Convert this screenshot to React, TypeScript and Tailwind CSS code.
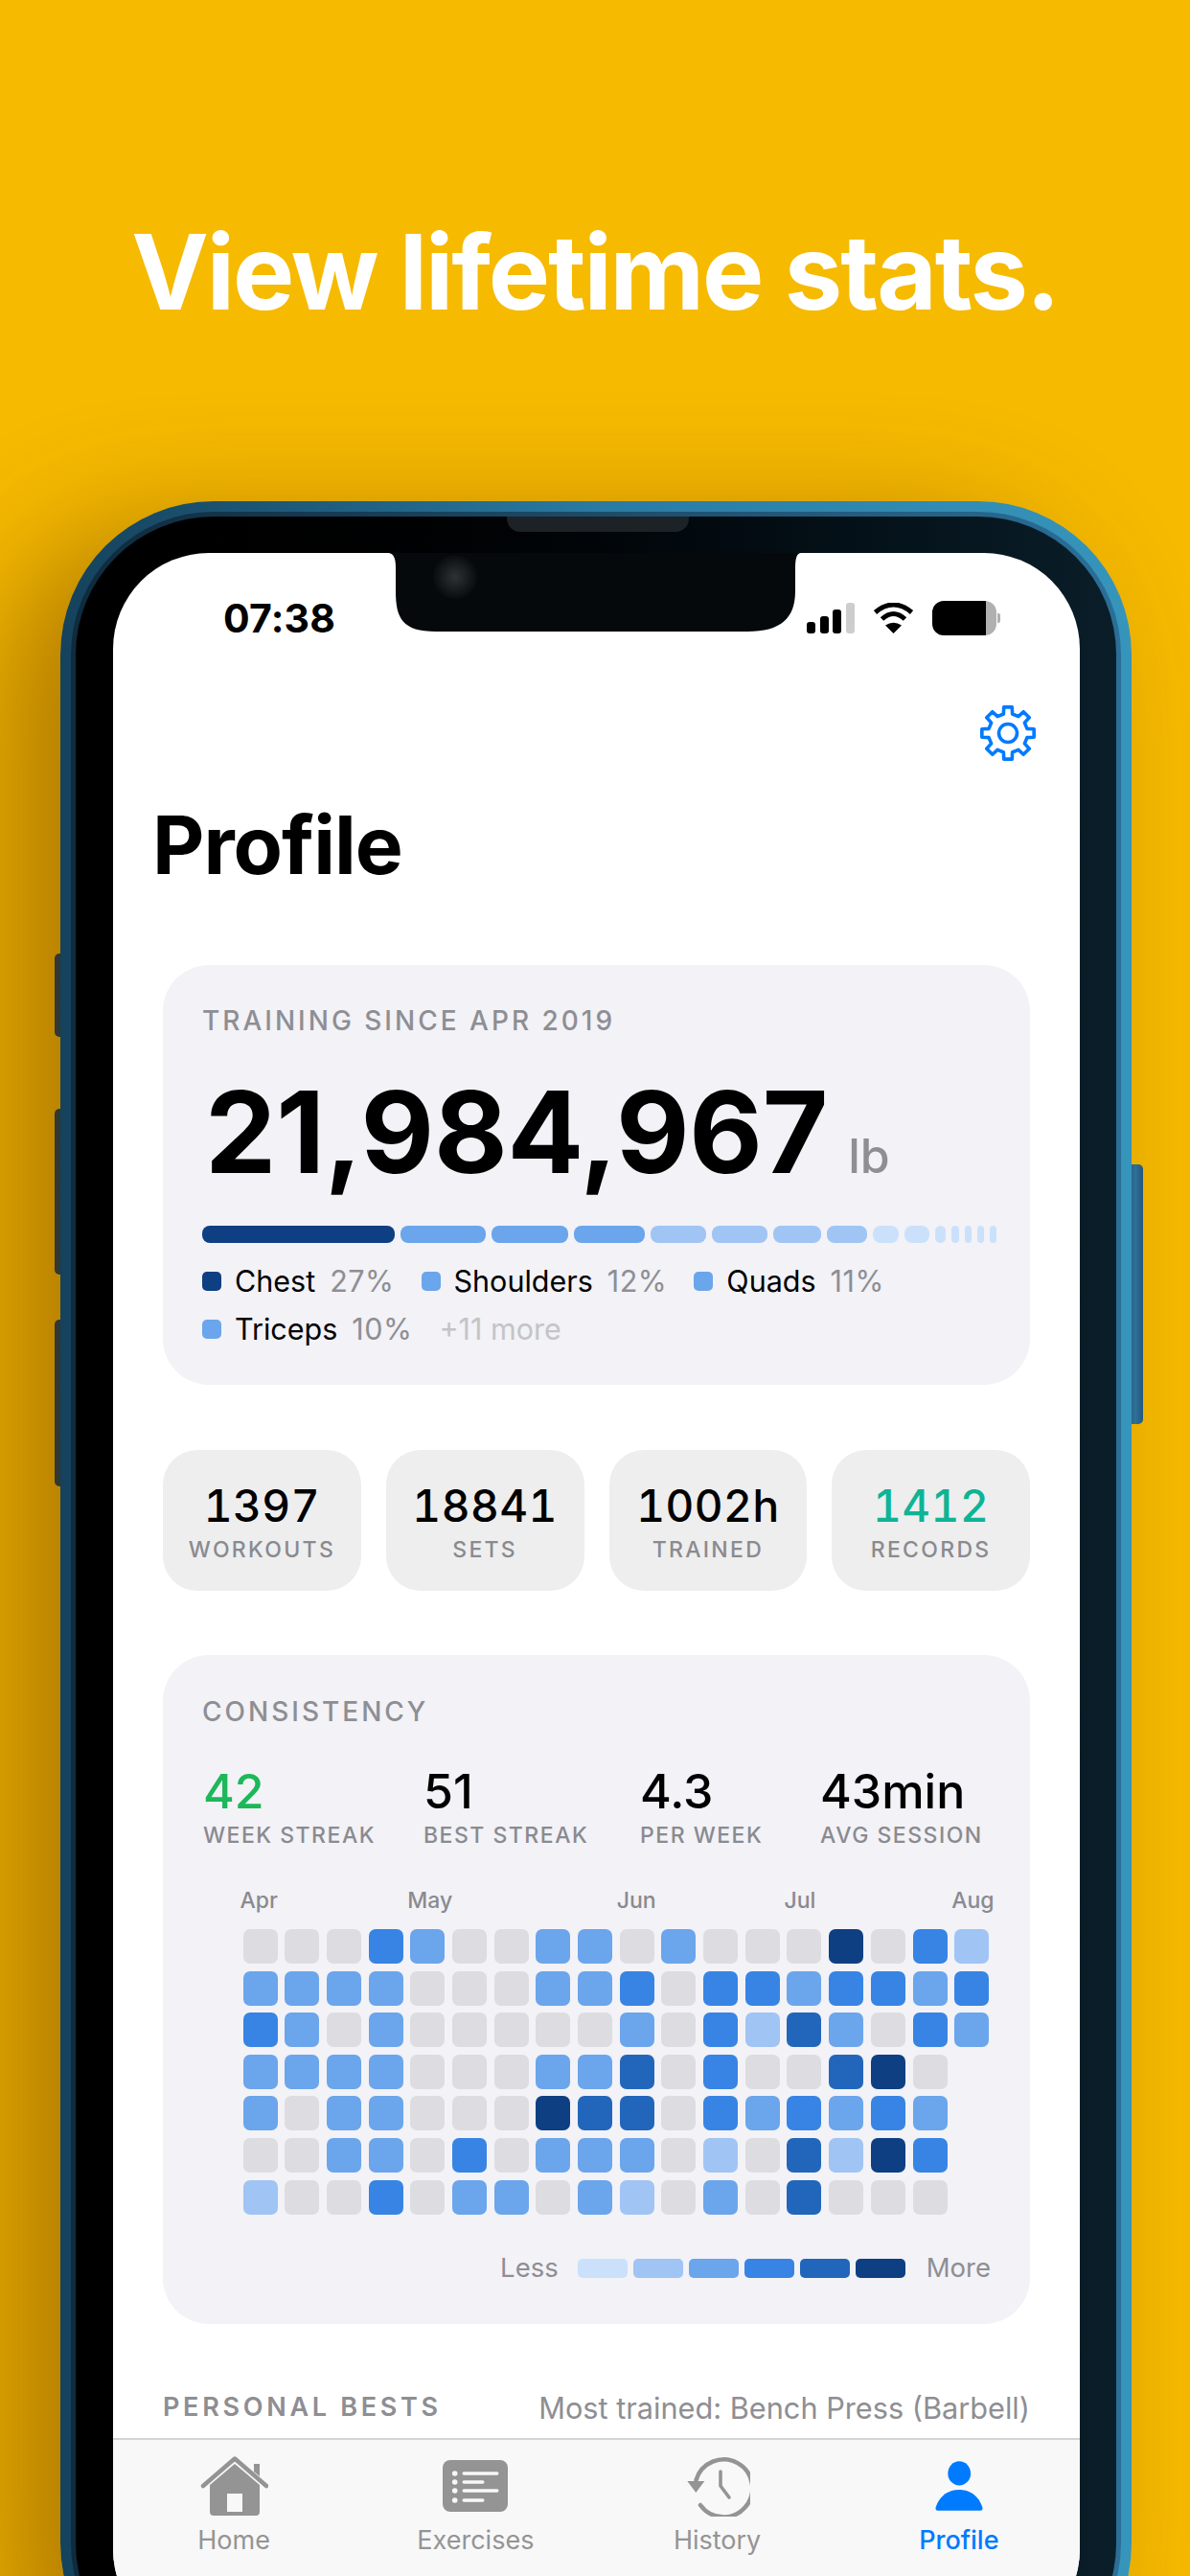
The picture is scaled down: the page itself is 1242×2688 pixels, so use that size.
const C: Record<number, string> = {
  [-1]: "bg-transparent",
  0: "bg-[#dcdce1]",
  2: "bg-[#a0c4f4]",
  3: "bg-[#6ba5ec]",
  4: "bg-[#3784e4]",
  5: "bg-[#2266bb]",
  6: "bg-[#0e3f82]",
};

const GRID = [
  [0, 0, 0, 4, 3, 0, 0, 3, 3, 0, 3, 0, 0, 0, 6, 0, 4, 2],
  [3, 3, 3, 3, 0, 0, 0, 3, 3, 4, 0, 4, 4, 3, 4, 4, 3, 4],
  [4, 3, 0, 3, 0, 0, 0, 0, 0, 3, 0, 4, 2, 5, 3, 0, 4, 3],
  [3, 3, 3, 3, 0, 0, 0, 3, 3, 5, 0, 4, 0, 0, 5, 6, 0, -1],
  [3, 0, 3, 3, 0, 0, 0, 6, 5, 5, 0, 4, 3, 4, 3, 4, 3, -1],
  [0, 0, 3, 3, 0, 4, 0, 3, 3, 3, 0, 2, 0, 5, 2, 6, 4, -1],
  [2, 0, 0, 4, 0, 3, 3, 0, 3, 2, 0, 3, 0, 5, 0, 0, 0, -1],
];

const SEGMENTS: [number, string][] = [
  [201, "bg-[#0e3f82]"],
  [89, "bg-[#6ba5ec]"],
  [80, "bg-[#6ba5ec]"],
  [74, "bg-[#6ba5ec]"],
  [58, "bg-[#a0c4f4]"],
  [58, "bg-[#a0c4f4]"],
  [50, "bg-[#a0c4f4]"],
  [42, "bg-[#a0c4f4]"],
  [27, "bg-[#cbe1fb]"],
  [26, "bg-[#cbe1fb]"],
  [11, "bg-[#cbe1fb]"],
  [8, "bg-[#cbe1fb]"],
  [7, "bg-[#cbe1fb]"],
  [7, "bg-[#cbe1fb]"],
  [7, "bg-[#cbe1fb]"],
];

function gearPoints() {
  const cx = 30;
  const cy = 30;
  const pts: string[] = [];
  const rIn = 20.5;
  const rOut = 27.5;
  for (let i = 0; i < 8; i++) {
    const a = i * 45 - 90;
    const list: [number, number][] = [
      [rIn, a - 13],
      [rOut, a - 9],
      [rOut, a + 9],
      [rIn, a + 13],
    ];
    list.forEach(([r, d]) => {
      const t = (d * Math.PI) / 180;
      pts.push(`${(cx + r * Math.cos(t)).toFixed(2)},${(cy + r * Math.sin(t)).toFixed(2)}`);
    });
  }
  return pts.join(" ");
}

function Gear() {
  return (
    <svg width="60" height="60" viewBox="0 0 60 60" fill="none" stroke="#007aff" strokeWidth="3.6" strokeLinejoin="round">
      <polygon points={gearPoints()} />
      <circle cx="30" cy="30" r="9.5" />
    </svg>
  );
}

function StatusIcons() {
  return (
    <div className="flex items-center">
      <div className="flex items-end gap-[4.6px] h-[32px]">
        <div className="w-[9px] h-[12px] rounded-[3px] bg-black" />
        <div className="w-[9px] h-[18px] rounded-[3px] bg-black" />
        <div className="w-[9px] h-[25px] rounded-[3px] bg-black" />
        <div className="w-[9px] h-[32px] rounded-[3px] bg-[#cdcdcd]" />
      </div>
      <svg className="ml-[19px]" width="43" height="32" viewBox="0 0 43 32" fill="none">
        <path d="M2.5 10 Q21.5 -6 40.5 10" stroke="#000" strokeWidth="5" strokeLinecap="butt" />
        <path d="M9.5 17 Q21.5 6 33.5 17" stroke="#000" strokeWidth="5" strokeLinecap="butt" />
        <path d="M21.5 32 L13 23.5 Q21.5 18 30 23.5 Z" fill="#000" />
      </svg>
      <div className="ml-[19px] flex items-center">
        <div className="flex w-[67px] h-[36px] rounded-[12px] overflow-hidden">
          <div className="w-[56px] bg-black" />
          <div className="flex-1 bg-[#b0b0b0]" />
        </div>
        <div className="ml-[1px] w-[3px] h-[10px] rounded-r-[2px] bg-[#b0b0b0]" />
      </div>
    </div>
  );
}

function Notch() {
  return (
    <svg className="absolute left-[287px] top-0" width="431" height="82" viewBox="0 0 431 82">
      <defs>
        <radialGradient id="lens">
          <stop offset="0" stopColor="#2e3235" />
          <stop offset="0.5" stopColor="#1b1f22" />
          <stop offset="1" stopColor="#080c0f" />
        </radialGradient>
      </defs>
      <path d="M0 0 H431 Q425 0 425 15 V40 C425 68 410 82 375 82 H50 C15 82 8 68 8 40 V15 Q8 0 0 0 Z" fill="#05090c" />
      <circle cx="70" cy="25" r="23" fill="url(#lens)" />
    </svg>
  );
}

function Tab({ label, active, children }: { label: string; active?: boolean; children: React.ReactNode }) {
  return (
    <div className="flex flex-col items-center">
      <div className="h-[64px] flex items-center justify-center">{children}</div>
      <div className={`mt-[9px] text-[27px] leading-[32px] ${active ? "text-[#007aff] font-medium" : "text-[#949494]"}`}>{label}</div>
    </div>
  );
}

function LegendItem({ color, name, pct }: { color: string; name: string; pct: string }) {
  return (
    <div className="flex items-center h-[50px]">
      <div className={`w-[20px] h-[20px] rounded-[5px] ${color}`} />
      <span className="ml-[14px] text-black">{name}</span>
      <span className="ml-[15px] tracking-[0.5px] text-[#8e8e93]">{pct}</span>
    </div>
  );
}

function Stat({ value, label, green }: { value: string; label: string; green?: boolean }) {
  return (
    <div className="h-[147px] pt-[30px] rounded-[36px] bg-[#eeeeef] flex flex-col items-center">
      <div className={`text-[46px] leading-[56px] tracking-[0.5px] tabular-nums font-medium ${green ? "text-[#0fb495]" : "text-black"}`}>{value}</div>
      <div className="mt-[4px] text-[23px] leading-[28px] tracking-[2.3px] font-medium text-[#8a8a8f]">{label}</div>
    </div>
  );
}

function Metric({ value, label, green }: { value: string; label: string; green?: boolean }) {
  return (
    <div className="flex flex-col">
      <div className={`text-[50px] leading-[60px] font-medium ${green ? "text-[#1cb859]" : "text-black"}`}>{value}</div>
      <div className="mt-[2px] text-[23px] leading-[28px] tracking-[1.5px] font-medium text-[#8a8a8f] whitespace-nowrap">{label}</div>
    </div>
  );
}

export default function App() {
  return (
    <div className="relative h-[2688px] w-[1242px] overflow-hidden bg-[#f6ba00] font-[family-name:Inter,sans-serif]">
      <div className="h-[523px] pt-[219px] text-center text-white text-[108px] leading-[130px] font-bold tracking-[-2.1px]">
        View lifetime stats.
      </div>

      <div className="relative ml-[63px] w-[1118px] h-[2291px]">
        <div className="absolute -left-[6px] top-[472px] w-[10px] h-[87px] rounded-l-[5px] bg-[#123a55]" />
        <div className="absolute -left-[6px] top-[634px] w-[10px] h-[173px] rounded-l-[5px] bg-[#123a55]" />
        <div className="absolute -left-[6px] top-[854px] w-[10px] h-[174px] rounded-l-[5px] bg-[#123a55]" />
        <div className="absolute -right-[12px] top-[692px] w-[16px] h-[271px] rounded-r-[5px] bg-gradient-to-r from-[#1f5a8a] via-[#2b76a4] to-[#1f5a8a]" />

        <div className="relative h-full rounded-[160px] p-[11px] bg-gradient-to-r from-[#15425c] via-[#2a7aa2] to-[#3695bb] shadow-[-60px_30px_130px_rgba(100,55,0,0.48)]">
          <div className="h-full rounded-[149px] p-[5px] bg-gradient-to-r from-[#0f2b3e] to-[#2a6f98]">
            <div className="relative h-full rounded-[144px] pl-[39px] pr-[38px] py-[38px] bg-gradient-to-r from-[#000000] to-[#0a1e29]">
              <div className="absolute left-[450px] top-0 w-[190px] h-[16px] rounded-b-[14px] bg-[#1c2226]" />

              <div className="relative h-full rounded-[100px] overflow-hidden bg-white flex flex-col">
                <Notch />
                <div className="flex-1 overflow-hidden">
                  <div className="h-[136px] pl-[115px] pr-[83px] flex items-center justify-between">
                    <div className="text-[41px] leading-none font-bold tracking-[0.2px] text-black">07:38</div>
                    <StatusIcons />
                  </div>

                  <div className="mt-[22px] pr-[45px] flex justify-end h-[59px]">
                    <Gear />
                  </div>

                  <div className="mt-[38px] pl-[41px] text-[84px] leading-[100px] font-bold text-black tracking-[-1px]">Profile</div>

                  <div className="px-[52px]">
                    <div className="mt-[75px] rounded-[48px] bg-[#f2f2f7] pl-[41px] pr-[35px] pt-[41px] pb-[33px]">
                      <div className="text-[28px] leading-[34px] tracking-[3px] font-medium text-[#8e8e93]">TRAINING SINCE APR 2019</div>
                      <div className="mt-[42px] pl-[3px] flex items-baseline">
                        <span className="text-[118px] leading-[115px] font-bold text-black tracking-[-0.2px]">21,984,967</span>
                        <span className="ml-[21px] text-[50px] leading-[50px] font-medium text-[#8e8e93]">lb</span>
                      </div>
                      <div className="mt-[40px] flex gap-[6px]">
                        {SEGMENTS.map(([w, c], i) => (
                          <div key={i} className={`h-[18px] rounded-[8px] ${c}`} style={{ width: w }} />
                        ))}
                      </div>
                      <div className="mt-[15px] flex flex-wrap gap-x-[28px] text-[30.5px]">
                        <LegendItem color="bg-[#0e3f82]" name="Chest" pct="27%" />
                        <LegendItem color="bg-[#6ba5ec]" name="Shoulders" pct="12%" />
                        <LegendItem color="bg-[#6ba5ec]" name="Quads" pct="11%" />
                        <LegendItem color="bg-[#6ba5ec]" name="Triceps" pct="10%" />
                        <div className="flex items-center h-[50px] text-[#c4c4c7]">+11 more</div>
                      </div>
                    </div>

                    <div className="mt-[68px] grid grid-cols-4 gap-[26px]">
                      <Stat value="1397" label="WORKOUTS" />
                      <Stat value="18841" label="SETS" />
                      <Stat value="1002h" label="TRAINED" />
                      <Stat value="1412" label="RECORDS" green />
                    </div>

                    <div className="mt-[67px] rounded-[48px] bg-[#f2f2f7] pt-[42px] pb-[41px]">
                      <div className="pl-[41px] text-[28px] leading-[34px] tracking-[3px] font-medium text-[#8e8e93]">CONSISTENCY</div>
                      <div className="mt-[36px] pl-[42px] grid grid-cols-[230px_226px_188px_1fr]">
                        <Metric value="42" label="WEEK STREAK" green />
                        <Metric value="51" label="BEST STREAK" />
                        <Metric value="4.3" label="PER WEEK" />
                        <Metric value="43min" label="AVG SESSION" />
                      </div>

                      <div className="mt-[40px] pl-[83.5px]">
                        <div className="grid grid-cols-[repeat(18,36px)] gap-x-[7.7px] text-[23px] leading-[28px] text-[#8a8a8f] font-medium">
                          <div className="col-start-1 -ml-[3px] whitespace-nowrap">Apr</div>
                          <div className="col-start-5 -ml-[3px] whitespace-nowrap">May</div>
                          <div className="col-start-10 -ml-[3px] whitespace-nowrap">Jun</div>
                          <div className="col-start-14 -ml-[3px] whitespace-nowrap">Jul</div>
                          <div className="col-start-18 -ml-[3px] whitespace-nowrap">Aug</div>
                        </div>
                        <div className="mt-[16px] grid grid-cols-[repeat(18,36px)] gap-x-[7.7px] gap-y-[7.6px]">
                          {GRID.flatMap((row, r) =>
                            row.map((v, c) => <div key={`${r}-${c}`} className={`h-[36px] rounded-[7px] ${C[v]}`} />)
                          )}
                        </div>
                      </div>

                      <div className="mt-[39px] pr-[41px] flex justify-end items-center h-[34px] text-[27.5px] text-[#8e8e93]">
                        <span>Less</span>
                        <div className="ml-[20px] flex gap-[6px]">
                          <div className="w-[52px] h-[20px] rounded-[5px] bg-[#cbe1fb]" />
                          <div className="w-[52px] h-[20px] rounded-[5px] bg-[#a0c4f4]" />
                          <div className="w-[52px] h-[20px] rounded-[5px] bg-[#6ba5ec]" />
                          <div className="w-[52px] h-[20px] rounded-[5px] bg-[#3784e4]" />
                          <div className="w-[52px] h-[20px] rounded-[5px] bg-[#2266bb]" />
                          <div className="w-[52px] h-[20px] rounded-[5px] bg-[#0e3f82]" />
                        </div>
                        <span className="ml-[22px]">More</span>
                      </div>
                    </div>

                    <div className="mt-[71px] flex justify-between items-center h-[34px] text-[#8e8e93]">
                      <span className="text-[27px] font-semibold tracking-[3.7px]">PERSONAL BESTS</span>
                      <span className="text-[30.7px]">Most trained: Bench Press (Barbell)</span>
                    </div>
                  </div>
                </div>

                <div className="h-[216px] shrink-0 border-t-2 border-[#d4d4d4] bg-[#f8f8f8] pt-[16px]">
                  <div className="grid grid-cols-4">
                    <Tab label="Home">
                      <svg width="72" height="64" viewBox="16 10 72 64" fill="none">
                        <path d="M20 42 L53 13.5 L86 42" stroke="#949494" strokeWidth="4.5" strokeLinecap="round" strokeLinejoin="round" />
                        <path d="M73 19 H79 V32 L73 27 Z" fill="#949494" />
                        <path fillRule="evenodd" d="M53 19 L79 41 V69 Q79 73 75 73 H31 Q27 73 27 69 V41 Z M45 50 V69 H61 V50 Z" fill="#949494" />
                      </svg>
                    </Tab>
                    <Tab label="Exercises">
                      <svg width="68" height="54" viewBox="0 0 68 54">
                        <rect width="68" height="54" rx="8" fill="#949494" />
                        <g fill="#f8f8f8">
                          <circle cx="12.7" cy="14" r="2.8" />
                          <circle cx="12.7" cy="23" r="2.8" />
                          <circle cx="12.7" cy="32" r="2.8" />
                          <circle cx="12.7" cy="42" r="2.8" />
                          <rect x="20.5" y="12.3" width="38" height="3.4" rx="1.7" />
                          <rect x="20.5" y="21.3" width="23" height="3.4" rx="1.7" />
                          <rect x="20.5" y="30.3" width="38" height="3.4" rx="1.7" />
                          <rect x="20.5" y="40.3" width="23" height="3.4" rx="1.7" />
                        </g>
                      </svg>
                    </Tab>
                    <Tab label="History">
                      <svg width="68" height="64" viewBox="22 11 68 64" fill="none" stroke="#949494">
                        <path d="M33.5 37 A30 30 0 1 1 38 63" strokeWidth="4.5" strokeLinecap="round" />
                        <path d="M24.3 38 H42.3 L33.3 50 Z" fill="#949494" stroke="none" />
                        <path d="M59 28 V43 L68 55" strokeWidth="3.6" strokeLinecap="round" strokeLinejoin="round" />
                      </svg>
                    </Tab>
                    <Tab active label="Profile">
                      <svg width="50" height="52" viewBox="285.5 17 50 52.5">
                        <ellipse cx="310.7" cy="30" rx="12" ry="12.8" fill="#007aff" />
                        <path d="M288 69.3 Q285 69.3 286 65.5 C290 53 300 47.3 310.5 47.3 C321 47.3 331 53 335 65.5 Q336 69.3 333 69.3 Z" fill="#007aff" />
                      </svg>
                    </Tab>
                  </div>
                </div>
              </div>
            </div>
          </div>
        </div>
      </div>
    </div>
  );
}
